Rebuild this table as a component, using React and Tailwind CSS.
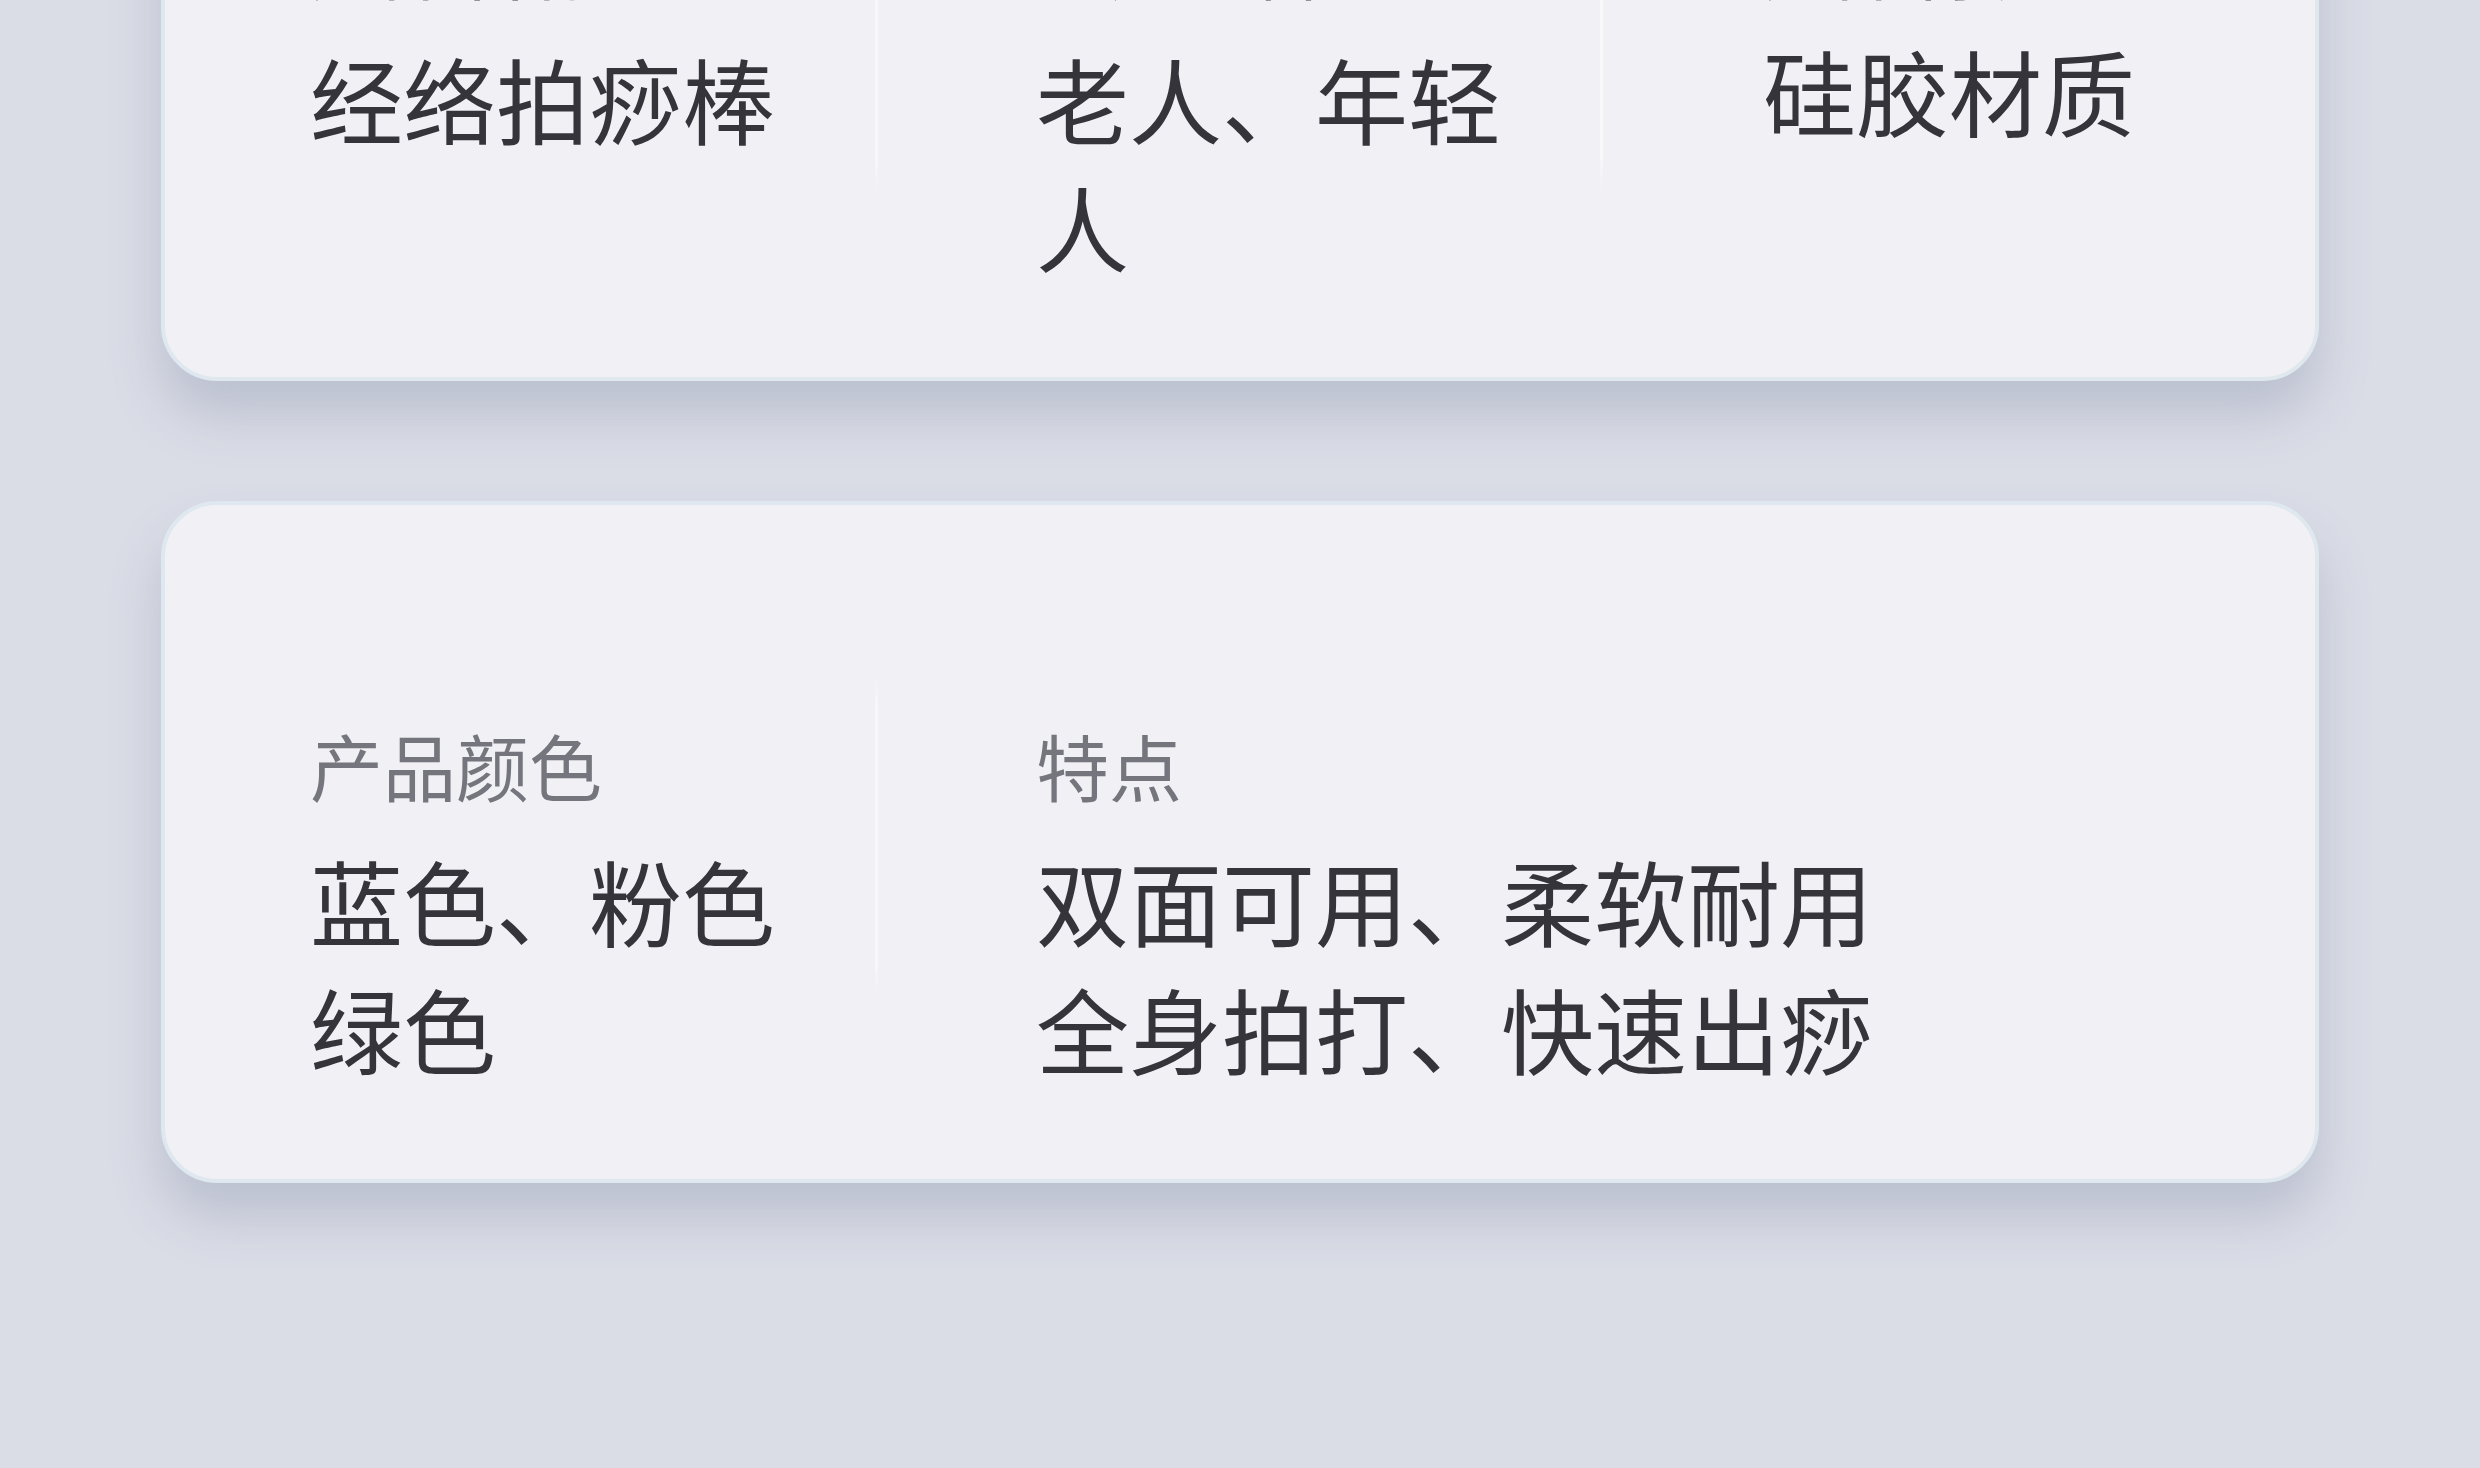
const cards = [
  [
    { label: '产品名称', lines: ['经络拍痧棒'] },
    { label: '适用人群', lines: ['老人、年轻人'] },
    { label: '产品材质', lines: ['硅胶材质'], lift: true },
  ],
  [
    { label: '产品颜色', lines: ['蓝色、粉色绿色'] },
    { label: '特点', lines: ['双面可用、柔软耐用', '全身拍打、快速出痧'] },
  ],
];

function Divider() {
  return <div className="w-[3px] h-[318px] -mt-[38px] shrink-0 bg-[linear-gradient(to_bottom,transparent,#f8f8fb_10%,#f8f8fb_90%,transparent)]" />;
}

function Field({ item, className }) {
  return (
    <div className={className}>
      <div className="text-[73px] leading-[102px] text-[#75757d]">{item.label}</div>
      <div className={item.lift ? 'mt-[13px] text-[93px] leading-[128px] text-[#34343a]' : 'mt-[21px] text-[93px] leading-[128px] text-[#34343a]'}>
        {item.lines.map((l, i) => (
          <div key={i}>{l}</div>
        ))}
      </div>
    </div>
  );
}

function Card({ items }) {
  return (
    <div className="rounded-[56px] bg-[#f0f0f5] border-4 border-[#dfe8ee] shadow-[0_34px_50px_rgba(120,130,160,0.3)] pl-[145px] pt-[208px] pb-[87px] flex items-start">
      <Field item={items[0]} className="w-[565px] shrink-0 pr-[60px]" />
      <Divider />
      <Field item={items[1]} className={items.length > 2 ? 'w-[722px] shrink-0 pl-[158px] pr-[60px]' : 'flex-1 pl-[158px]'} />
      {items[2] && (
        <>
          <Divider />
          <Field item={items[2]} className="flex-1 pl-[160px]" />
        </>
      )}
    </div>
  );
}

export default function App() {
  return (
    <div className="h-[1468px] overflow-hidden bg-[#dadde6] font-['Noto_Sans_CJK_SC','Noto_Sans',sans-serif]">
      <div className="px-[161px] -mt-[301px] flex flex-col gap-[120px]">
        {cards.map((c, i) => (
          <Card key={i} items={c} />
        ))}
      </div>
    </div>
  );
}
